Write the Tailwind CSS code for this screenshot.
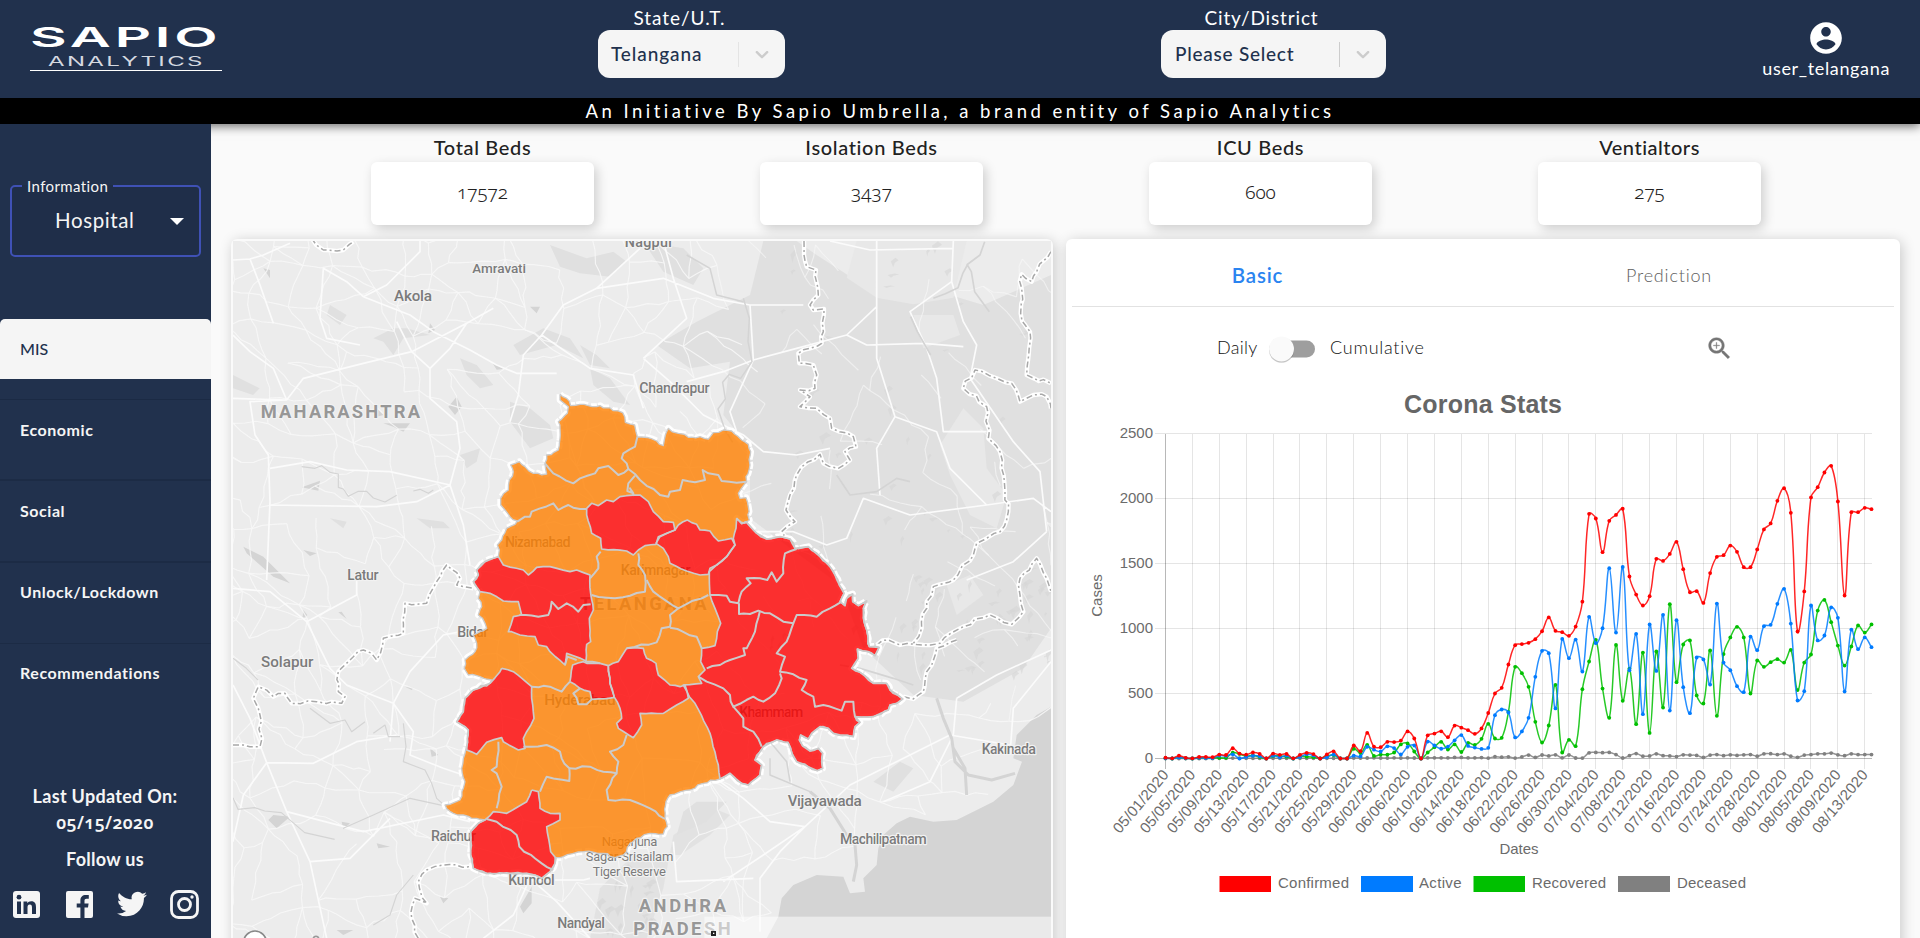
<!DOCTYPE html>
<html lang="en">
<head>
<meta charset="utf-8">
<title>Sapio Analytics</title>
<script src="https://cdn.jsdelivr.net/npm/@tailwindcss/browser@4"></script>
</head>
<body class="h-[938px] overflow-hidden bg-[#fafafa] font-['Lato',sans-serif] text-[#222]">

<header class="relative z-10 shadow-[0_2px_10px_rgba(0,0,0,0.6)]">
  <div class="flex h-[98px] bg-[#21314d] text-white">
    <div class="w-[480px] pt-4 pl-[30px]">
      <svg class="overflow-visible" width="192" height="56" viewBox="0 -8 192 56" font-family="Inter, sans-serif" fill="#fff">
        <text transform="translate(0 23) scale(2.05 1)" font-size="27.500" font-weight="600" textLength="91.500" lengthAdjust="spacing">SAPIO</text>
        <text transform="translate(18 42) scale(1.85 1)" font-size="13" textLength="83.500" lengthAdjust="spacing" fill="#d5d9e0">ANALYTICS</text>
        <rect y="46" width="192" height="1"/>
      </svg>
    </div>
    <div class="ml-[118px] w-[187px] pt-[6px]">
      <div class="h-6 pr-6 text-center text-[19px] leading-6 tracking-[0.95px]">State/U.T.</div>
      <div class="flex h-12 items-center rounded-xl bg-[#f5f5f5] pl-[13px] text-[19px] font-medium text-[#21314d]">
        <span class="w-[127px] tracking-[0.9px]">Telangana</span>
        <span class="h-[25px] w-px bg-[#e4e4e4]"></span>
        <svg class="ml-3" width="22" height="22" viewBox="0 0 20 20" fill="#ccc"><path d="M4.516 7.548c.436-.446 1.043-.481 1.576 0L10 11.295l3.908-3.747c.533-.481 1.141-.446 1.574 0 .436.445.408 1.197 0 1.615-.406.418-4.695 4.502-4.695 4.502a1.095 1.095 0 0 1-1.576 0S4.924 9.581 4.516 9.163s-.436-1.170 0-1.615z"/></svg>
      </div>
    </div>
    <div class="ml-[376px] w-[225px] pt-[6px]">
      <div class="h-6 pr-6 text-center text-[19px] leading-6 tracking-[0.85px]">City/District</div>
      <div class="flex h-12 items-center rounded-xl bg-[#f5f5f5] pl-[14px] text-[19px] font-medium text-[#21314d]">
        <span class="w-[164px] tracking-[0.75px]">Please Select</span>
        <span class="h-[25px] w-px bg-[#ccc]"></span>
        <svg class="ml-3" width="22" height="22" viewBox="0 0 20 20" fill="#ccc"><path d="M4.516 7.548c.436-.446 1.043-.481 1.576 0L10 11.295l3.908-3.747c.533-.481 1.141-.446 1.574 0 .436.445.408 1.197 0 1.615-.406.418-4.695 4.502-4.695 4.502a1.095 1.095 0 0 1-1.576 0S4.924 9.581 4.516 9.163s-.436-1.170 0-1.615z"/></svg>
      </div>
    </div>
    <div class="mr-[30px] ml-auto flex flex-col items-center pt-[19px]">
      <svg width="38" height="38" viewBox="0 0 24 24" fill="#fff"><path d="M12 2C6.480 2 2 6.480 2 12s4.480 10 10 10 10-4.480 10-10S17.520 2 12 2zm0 3c1.660 0 3 1.340 3 3s-1.340 3-3 3-3-1.340-3-3 1.340-3 3-3zm0 14.200c-2.500 0-4.710-1.280-6-3.220.03-1.990 4-3.080 6-3.080 1.990 0 5.970 1.090 6 3.080-1.290 1.940-3.500 3.220-6 3.220z"/></svg>
      <div class="text-[18px] leading-[22px] tracking-[0.65px]">user_telangana</div>
    </div>
  </div>
  <div class="h-[26px] bg-black text-center text-[18.500px] leading-[26px] tracking-[3.480px] text-white">An Initiative By Sapio Umbrella, a brand entity of Sapio Analytics</div>
</header>

<div class="flex h-[814px]">
  <aside class="relative z-20 flex w-[211px] shrink-0 flex-col bg-[#21314d] text-[#f5f5f5]">
    <fieldset class="mt-[53px] ml-[10px] h-[80px] w-[191px] rounded-[5px] border-2 border-[#3f51b5] bg-[#1f2e49] pl-[10px]">
      <legend class="px-[5px] text-[15px] leading-[18px] tracking-[0.4px]">Information</legend>
      <div class="flex h-[50px] items-center pl-[33px] text-[20.500px] tracking-[0.6px]">
        <span class="w-[115px]">Hospital</span>
        <svg class="mt-[2px]" width="14" height="7" viewBox="0 0 14 7" fill="#fff"><path d="M0 0h14L7 7z"/></svg>
      </div>
    </fieldset>
    <nav class="mt-[62px] text-[16px] font-bold tracking-[0.55px]">
      <div class="h-[81px] border-b border-[#1b2a44]"><div class="h-[60px] rounded-t-[5px] bg-[#f5f5f5] pl-5 leading-[60px] font-medium tracking-normal text-[#21314d]">MIS</div></div>
      <div class="h-[81px] border-b-2 border-[#1c2b45] pl-5 leading-[60px]">Economic</div>
      <div class="h-[82px] border-b-2 border-[#1c2b45] pl-5 leading-[60px]">Social</div>
      <div class="h-[81px] border-b border-[#1c2b45] pl-5 leading-[58px]">Unlock/Lockdown</div>
      <div class="pl-5 leading-[58px]">Recommendations</div>
    </nav>
    <div class="mt-[81px] pr-px text-center text-[18px] leading-[26px] font-bold tracking-[0.3px]">
      <div>Last Updated On:</div>
      <div class="font-['Noto_Sans','Lato',sans-serif] text-[17.500px] font-semibold tracking-[0.4px] [font-feature-settings:'onum']">05/15/2020</div>
      <div class="mt-[11px]">Follow us</div>
    </div>
    <div class="mt-[17px] flex items-center pl-[13px]">
      <svg width="27" height="27" viewBox="0 0 27 27"><rect width="27" height="27" rx="3" fill="#f5f5f5"/><g fill="#21314d"><circle cx="6" cy="6.200" r="2.400"/><path d="M4 10.500h4V23H4zM10.500 10.500h3.800v1.700c.7-1.200 2-2 3.900-2 3.800 0 4.800 2.400 4.800 6V23h-4v-6c0-1.700-.2-3.400-2.200-3.400s-2.300 1.600-2.300 3.300V23h-4z"/></g></svg>
      <svg class="ml-[26px]" width="27" height="27" viewBox="0 0 27 27"><path fill="#f5f5f5" d="M2 0h23a2 2 0 0 1 2 2v23a2 2 0 0 1-2 2h-6.500V16.600h3.500l.6-4.200h-4.100V9.800c0-1.200.5-2 2.100-2h2.200V4.100c-.5-.1-1.600-.2-3-.2-3.300 0-5.400 1.900-5.400 5.400v3.100h-3.700v4.200h3.700V27H2a2 2 0 0 1-2-2V2a2 2 0 0 1 2-2z"/></svg>
      <svg class="ml-[24px]" width="30" height="30" viewBox="0 0 24 24" fill="#f5f5f5"><path d="M23.950 4.570a10 10 0 0 1-2.820.77 4.960 4.960 0 0 0 2.160-2.720c-.95.550-2 .950-3.130 1.180a4.920 4.920 0 0 0-8.380 4.480C7.690 8.090 4.070 6.130 1.640 3.160a4.820 4.820 0 0 0-.67 2.480c0 1.710.87 3.210 2.190 4.100a4.900 4.900 0 0 1-2.230-.62v.06a4.920 4.920 0 0 0 3.950 4.830 5 5 0 0 1-2.210.08 4.940 4.940 0 0 0 4.600 3.420A9.870 9.870 0 0 1 0 19.540a13.990 13.990 0 0 0 7.550 2.210c9.050 0 14-7.500 14-13.980 0-.21 0-.420-.02-.63a9.940 9.940 0 0 0 2.460-2.550z"/></svg>
      <svg class="ml-[23px]" width="29" height="29" viewBox="0 0 29 29" fill="none" stroke="#f5f5f5" stroke-width="2.800"><rect x="1.500" y="1.500" width="26" height="26" rx="7"/><circle cx="14.500" cy="14.500" r="6"/><circle cx="22" cy="7" r="1.700" fill="#f5f5f5" stroke="none"/></svg>
    </div>
  </aside>

  <main class="flex min-w-0 grow flex-col">
    <section class="grid h-[101px] w-[1633px] shrink-0 grid-cols-4 pt-[10px] pl-[77px] text-center">
      <div class="flex flex-col items-center"><div class="mb-[2px] text-[20px] leading-[26px] font-medium tracking-[0.65px]">Total Beds</div><div class="h-[63px] w-[223px] rounded-[6px] bg-white font-['Noto_Sans','Lato',sans-serif] text-[19px] leading-[61px] font-light [font-feature-settings:'onum'] shadow-[3px_4px_12px_rgba(0,0,0,0.18)]">17572</div></div>
      <div class="flex flex-col items-center"><div class="mb-[2px] text-[20px] leading-[26px] font-medium tracking-[0.65px]">Isolation Beds</div><div class="h-[63px] w-[223px] rounded-[6px] bg-white font-['Noto_Sans','Lato',sans-serif] text-[19px] leading-[61px] font-light [font-feature-settings:'onum'] shadow-[3px_4px_12px_rgba(0,0,0,0.18)]">3437</div></div>
      <div class="flex flex-col items-center"><div class="mb-[2px] text-[20px] leading-[26px] font-medium tracking-[0.65px]">ICU Beds</div><div class="h-[63px] w-[223px] rounded-[6px] bg-white font-['Noto_Sans','Lato',sans-serif] text-[19px] leading-[61px] font-light [font-feature-settings:'onum'] shadow-[3px_4px_12px_rgba(0,0,0,0.18)]">600</div></div>
      <div class="flex flex-col items-center"><div class="mb-[2px] text-[20px] leading-[26px] font-medium tracking-[0.5px]">Ventialtors</div><div class="h-[63px] w-[223px] rounded-[6px] bg-white font-['Noto_Sans','Lato',sans-serif] text-[19px] leading-[61px] font-light [font-feature-settings:'onum'] shadow-[3px_4px_12px_rgba(0,0,0,0.18)]">275</div></div>
    </section>

    <div class="mt-[14px] flex pl-[20px]">
      <section class="h-[760px] w-[822px] shrink-0 rounded-[6px] bg-[#fafafa] pt-[2px] pl-[2px] shadow-[2px_2px_14px_rgba(0,0,0,0.2)]">
        <svg class="block" width="818" height="697" viewBox="9 18 2454 2091" font-family="Roboto, sans-serif">
          <rect x="9" y="18" width="2454" height="2091" fill="#ececec"/>
          <g fill="#e0e0e0">
            <path d="M1600 18L1700 18 1760 60 1900 150 2040 200 2160 180 2260 210 2463 120V1180L2380 1300 2200 1400 2050 1380 1900 1240 1830 1050 1560 850 1560 640 1480 540 1500 380 1380 400 1280 330 1400 260 1560 180z"/>
            <path d="M1210 1860L1110 1960 1080 2110H1250L1300 1960 1330 1800 1450 1720 1500 1740 1440 1800 1350 1860z" opacity=".8"/>
            <path d="M960 30l110 40 80-20 40 30-50 45-90-10-60-20zM1240 20l120 20 60 60-30 50-90-40zM840 500l60 20 60 50 10 40-70 30-60-80zM1050 330l50 30 40 40-60-10zM1080 400l60 30 60 80-50-10-60-50zM850 330l90-50 80 30 40 60-80-40-110 30zM300 210l50 30-20 30-40-30zM430 310l60-30 40 0 70 20-80 10-30 50-30-40zM690 370l50 20 50 60-40 10-40-40zM9 420l80 40-20 20-60-20zM690 660l60-20-10 40-30 20zM300 850l50 10-10 20zM560 850l80 10 20 20-60 0z"/>
            <path d="M1930 1640l80-60 40 20-60 70zM1400 1700l90 0-60 60-90 40 20-70z"/>
          </g>
          <g fill="#e8e8e8"><path d="M1880 18h330l-40 170-120 20-110-20-90-60zM2050 240l120 0 20 60-110 40zM2200 520l60 60 10 120 60 80-30 100-80-40-60-120-30-90zM2150 1050l70-30 40 60-80 60z"/></g>
          <g fill="#d6d6d6" id="terrain"></g>
          <g fill="#d4d4d4">
            <path d="M2463 1415L2420 1440 2360 1500 2350 1570 2376 1580 2350 1650 2290 1700 2180 1755 2110 1760 2040 1745 2000 1765 1960 1800 1945 1840 1940 1890 1900 1930 1905 1970 1860 1975 1840 1925 1760 1920 1690 1950 1655 1990 1645 2045 1610 2110H2463z"/>
            <path d="M655 515l25-30 15 30-20 25zM100 100l20 5 0 25zM215 757l55-20-5 30zM600 265l15 20-20 10zM900 215l30 0-10 20zM785 380l35 22-20 2zM220 945l40 10-20 8zM40 935l60 30 80 80-50-20-80-70zM130 1740l50 5-40 35-25-25zM335 1760l25 5-20 18zM525 1355l25 5-5 5zM335 1130l15 22-25-20zM220 1125l12 15-15 15zM600 1540l25 20-20 5zM630 1985l25 5-15 15zM870 2015l35-60 0 50-25 30zM440 1825l40 10-35 5zM320 2085l50 0-30 15zM460 565l80 0-20 25-30-15zM440 520l20 20-20 5z"/>
          </g>
          <g fill="none" stroke="#f8f8f8" stroke-width="3.500" id="roads"></g>
          <g fill="none" stroke="#fbfbfb" stroke-width="5" stroke-linejoin="round">
            <path d="M9 75L60 72 100 60 180 25M60 72L90 150 130 265M9 490L170 495 130 400 60 350 9 300M170 495L220 430 400 385 545 350 710 265 790 220M170 495L60 500 75 600 115 660 120 800 110 1035M400 185L350 140 280 100 270 250 290 310 390 330M400 185L470 150 570 50 570 18M400 185L540 240 610 290 720 345 800 390 860 415 980 415M600 400L545 350 500 260M600 400L600 490 680 560 690 640 660 750 480 710 350 705 240 680 120 700M660 750L700 870 720 990M660 750L560 800 440 815 120 810M790 220L710 265 660 340 600 400M935 300L1000 210 1100 160 1230 40M935 300L880 360 865 480 840 560M935 300L1080 400 1210 420 1240 520M1100 160L1300 130 1450 190 1560 210 1720 210M1300 18L1330 130 1370 250 1240 370M1240 370L1320 440 1420 540 1540 600 1600 650 1700 660 1800 640M1370 440L1480 410 1570 375 1700 340 1850 300 1940 215M1560 210L1570 375 1500 530 1520 590M1800 18L1920 45 2170 40M2170 18L2165 140 2040 230 2090 340 2120 430 2140 590 2270 590M2165 140L2200 260 2240 330 2220 430 2350 620 2430 710 2450 890M1940 18L1940 370 1995 545 2120 590 2160 700 2270 810 2040 840 1900 790 1850 910 1790 930 1690 890 1560 890M1995 545L1940 640 1950 780M1850 300L1910 330 2080 325 2200 335M2270 810L2410 790 2463 830M2450 890L2350 980 2210 1035M110 1583L250 1585 380 1520 500 1500M110 1583L60 1450 9 1350M110 1583L170 1730 240 1880 290 2110M110 1583L40 1680 9 1820M230 1160L120 1070 9 1060M230 1160L300 1300 350 1350 490 1405 540 1310 640 1200 740 1180M230 1160L380 1080 380 1035M490 1405L550 1490 540 1560 640 1600 700 1620M490 1405L480 1520M170 1730L400 1790 640 1740 720 1760M240 1880L360 1870 480 1750M900 1930L850 2040 760 2110M900 1930L980 2000 1080 2110M1725 1775L1620 1760 1540 1690 1470 1640M1725 1775L1860 1650 1960 1600 2160 1500 2340 1530M1725 1775L1600 1860 1480 1940M1725 1775L1650 1850 1590 1930 1590 2090M2180 1390L2170 1500 2100 1640 1960 1700M2340 1560L2350 1420 2463 1280M2180 1390L2300 1320 2463 1245M1570 1930L1340 1940 1330 1820M930 1935L1060 1935 1080 1930"/>
          </g>
          <g fill="none" stroke="#d4d4d4" stroke-width="4" stroke-linejoin="round">
            <path d="M215 695l40 5 20-8 25 20 25 5 0 40 15 5 15 22 30-15 25 0 20 20 35 12 35-20M550 768l20-5 25 12 15-10M9 1688l15 35 50-5 30 10 50 5 70 60 90 20M340 1780l90-40 110-50 100 22M520 1465l8 70-8 45 65 25 20 40 15 45 20 18M9 1270l40 30 35 35M240 1420l60 45 45-10 20 35 40-30M430 1495l35-25 10 35 35 0M430 2070l50-30 20-60 50-60" stroke-width="3.500"/>
            <path d="M1620 1520l50 60 10 60M1620 1570l0 50 120 50M1540 190l18 60-4 70 12 60-34 50-34-12-20 24 8 50-22 30 20 60 24 40M1370 60l70 40 20 80 80 20" stroke-width="4.500"/>
            <path d="M1740 1670l60 50 50 80 25 30 5 60-10 50M2120 1390l20 60 25 60 10 70 40 40 70 15 70-20M2170 1540l35 60 5 80" stroke-width="9"/>
            <path d="M2042 245l20 45 40 70M2110 190l36-14 38-18 14-42 14-26 12 20 10 60 44 60M2210 90l40-30 14-40M1830 1290l60 10 100 30 60 20M1820 720l40 60 80-10 60-40 40 10" stroke-width="5"/>
          </g>
          <g id="stateLines" fill="none" stroke-linejoin="round">
            <g stroke="#fff" stroke-width="13" id="stateHalo"></g>
            <g stroke="#a8a8a8" stroke-width="4.500" stroke-dasharray="18 9 6 9" id="stateDash"></g>
          </g>
          <path id="stateEdge" fill="none" stroke="#fff" stroke-width="20" stroke-linejoin="round" stroke-dasharray="34 9 20 4"/>
          <g fill="#7b7b7b" font-weight="500" font-size="43" stroke="#f2f2f2" stroke-width="7" stroke-linejoin="round" paint-order="stroke">
            <text x="1184" y="35" textLength="146">Nagpur</text>
            <text x="727" y="115" font-size="41" textLength="161">Amravati</text>
            <text x="492" y="198" font-size="46" textLength="114">Akola</text>
            <text x="1228" y="473" textLength="211">Chandrapur</text>
            <text x="825" y="935" textLength="197">Nizamabad</text>
            <text x="352" y="1034" textLength="94">Latur</text>
            <text x="1172" y="1020" textLength="210">Karimnagar</text>
            <text x="682" y="1206" textLength="93">Bidar</text>
            <text x="93" y="1297" font-size="46" textLength="157">Solapur</text>
            <text x="943" y="1409" font-size="46" textLength="214">Hyderabad</text>
            <text x="1528" y="1447" textLength="192">Khammam</text>
            <text x="2255" y="1556" textLength="163">Kakinada</text>
            <text x="1673" y="1712" font-size="46" textLength="222">Vijayawada</text>
            <text x="1830" y="1828" textLength="260">Machilipatnam</text>
            <text x="603" y="1819" textLength="135">Raichur</text>
            <text x="835" y="1951" textLength="139">Kurnool</text>
            <text x="982" y="2078" textLength="143">Nandyal</text>
            <g font-size="39" font-weight="400">
              <text x="1115" y="1833" textLength="167">Nagarjuna</text>
              <text x="1067" y="1878" textLength="263">Sagar-Srisailam</text>
              <text x="1088" y="1923" textLength="220">Tiger Reserve</text>
            </g>
            <g fill="#979797" font-size="55" font-weight="700">
              <text x="92" y="549" textLength="478">MAHARASHTRA</text>
              <text x="1050" y="1124" textLength="380">TELANGANA</text>
              <text x="1226" y="2032" textLength="262">ANDHRA</text>
              <text x="1210" y="2100" textLength="292">PRADESH</text>
            </g>
          </g>
          <g opacity=".8">
            <path id="stateFill" fill="#ff8000"/>
            <g id="redFill" fill="#f00"></g>
          </g>
          <g id="districtLines" fill="none" stroke="#cbcbcb" stroke-width="6" stroke-linejoin="round"></g>
          <rect x="1423" y="2045" width="1040" height="64" fill="#fff" opacity=".5"/>
          <rect x="1443" y="2088" width="15" height="15" fill="#222"/><rect x="1449" y="2093" width="4" height="4" fill="#fff"/>
          <circle cx="75" cy="2122" r="34" fill="#fff" stroke="#888" stroke-width="5"/>
          <circle cx="258" cy="2112" r="8" fill="#fff" stroke="#999" stroke-width="5"/>
        </svg>
      </section>

      <section class="ml-[13px] h-[760px] w-[834px] shrink-0 rounded-[6px] bg-white px-[6px] shadow-[2px_2px_14px_rgba(0,0,0,0.2)]">
        <div class="grid h-[68px] grid-cols-2 border-b border-[#e2e2e2] text-center leading-[72px]">
          <div class="pr-[40px] text-[20.500px] font-semibold tracking-[0.8px] text-[#2a84f0]">Basic</div>
          <div class="pl-[143px] text-left text-[18px] font-light tracking-[0.8px] text-[#606060]">Prediction</div>
        </div>
        <div class="flex h-[84px] items-center pl-[145px] text-[18px] font-light text-[#111]">
          <span class="-mt-[3px] w-[52px] tracking-[0.3px]">Daily</span>
          <svg width="48" height="36" viewBox="0 0 48 36"><rect x="6" y="9.500" width="40" height="17" rx="8.500" fill="#9e9e9e"/><circle cx="12.500" cy="19.500" r="12.500" fill="#000" opacity=".12"/><circle cx="12.500" cy="18.800" r="12.500" fill="#000" opacity=".15"/><circle cx="12.500" cy="18" r="12.500" fill="#fafafa"/></svg>
          <span class="-mt-[3px] ml-[13px] w-[375px] tracking-[0.75px]">Cumulative</span>
          <svg class="-mt-[2px]" width="29" height="29" viewBox="0 0 24 24" fill="#757575"><path d="M15.500 14h-.79l-.28-.27C15.410 12.590 16 11.110 16 9.500 16 5.910 13.090 3 9.500 3S3 5.910 3 9.500 5.910 16 9.500 16c1.610 0 3.090-.59 4.230-1.570l.27.28v.79l5 4.990L20.490 19l-4.990-5zm-6 0C7.010 14 5 11.990 5 9.500S7.010 5 9.500 5 14 7.010 14 9.500 11.990 14 9.500 14zM12 9.250h-2.250V7h-.5v2.250H7v.5h2.250V12h.5V9.750H12z" stroke="#757575" stroke-width=".3"/></svg>
        </div>
        <svg class="-ml-[6px] block" width="834" height="520" viewBox="1066 391 834 520" font-family="'Liberation Sans', Arial, sans-serif" font-size="15" fill="#6b6b6b">
          <text x="1404" y="413" font-size="25" font-weight="700" fill="#666" textLength="158">Corona Stats</text>
          <g id="grid" stroke="#000" stroke-opacity=".1" shape-rendering="crispEdges"></g>
          <g id="ticks"></g>
          <text transform="translate(1102 595.500) rotate(-90)" text-anchor="middle">Cases</text>
          <text x="1519" y="854" text-anchor="middle">Dates</text>
          <g id="series" stroke-width="1.500"></g>
          <rect x="1219.500" y="876" width="51.500" height="16" fill="#f00"/><text x="1278" y="888" textLength="71">Confirmed</text>
          <rect x="1361" y="876" width="52" height="16" fill="#007bff"/><text x="1419" y="888" textLength="42.500">Active</text>
          <rect x="1473.500" y="876" width="51.500" height="16" fill="#00c000"/><text x="1532" y="888" textLength="74">Recovered</text>
          <rect x="1618" y="876" width="52" height="16" fill="#808080"/><text x="1677" y="888" textLength="69">Deceased</text>
        </svg>
      </section>
    </div>
  </main>
</div>

<script>
const NS = 'http://www.w3.org/2000/svg';
function add(parent, tag, attrs, text) {
  const e = document.createElementNS(NS, tag);
  for (const k in attrs) e.setAttribute(k, attrs[k]);
  if (text) e.textContent = text;
  document.getElementById(parent).appendChild(e);
  return e;
}
let seed = 7;
const rnd = () => (seed = (seed * 16807) % 2147483647) / 2147483647;

// Adds small irregular bends between the vertices of a polyline.
function rough(str, amp, step) {
  const p = str.trim().split(/\s+/).map(s => s.split(',').map(Number));
  const out = [p[0]];
  for (let i = 1; i < p.length; i++) {
    const [x0, y0] = p[i - 1], [x1, y1] = p[i];
    const n = Math.max(1, Math.round(Math.hypot(x1 - x0, y1 - y0) / step));
    for (let k = 1; k < n; k++) out.push([x0 + (x1 - x0) * k / n + (rnd() - .5) * amp, y0 + (y1 - y0) * k / n + (rnd() - .5) * amp]);
    out.push(p[i]);
  }
  return 'M' + out.map(q => q[0].toFixed(1) + ' ' + q[1].toFixed(1)).join('L');
}

// Minor roads: jittered lattice on land
const nodes = {};
for (let i = -1; i < 27; i++) for (let j = -1; j < 23; j++) nodes[i + ',' + j] = [i * 98 + (rnd() - .5) * 85, j * 98 + (rnd() - .5) * 85];
const onLand = (x, y) => !(x > 1650 && y > 1900) && !(x > 1900 && y > 1750) && !(x > 2300 && y > 1480);
for (let i = -1; i < 26; i++) for (let j = -1; j < 22; j++) {
  const a = nodes[i + ',' + j];
  for (const [di, dj] of [[1, 0], [0, 1], [1, 1]]) {
    const b = nodes[(i + di) + ',' + (j + dj)];
    if (!b || !onLand(a[0], a[1]) || !onLand(b[0], b[1])) continue;
    const east = a[0] > 1450 && a[1] < 1400;
    if (rnd() < (east ? .14 : dj && di ? .3 : .72)) add('roads', 'path', { d: rough(a[0] + ',' + a[1] + ' ' + b[0] + ',' + b[1], 14, 32), opacity: east ? .6 : .85 });
  }
}
// Relief flecks in the eastern hills
for (let k = 0; k < 110; k++) {
  let x = 1600 + rnd() * 850, y = 30 + rnd() * 1250;
  if (k > 50) { x = 2000 + rnd() * 460; y = 1000 + rnd() * 330; }
  if (k > 85) { x = 1100 + rnd() * 180; y = 1900 + rnd() * 200; }
  const w = 8 + rnd() * 28, h = 6 + rnd() * 30;
  add('terrain', 'path', { d: `M${x} ${y}l${w * .6} ${-h * .4} ${w * .4} ${h * .3} ${-w * .5} ${h * .3} ${-w * .2} ${h * .5}z`, opacity: .6 });
}

const stateBorders = [
  '1722,18 1722,60 1730,95 1758,105 1765,180 1740,210 1750,225 1782,222 1780,290 1775,325 1740,340 1705,355 1708,385 1750,390 1760,420 1755,460 1710,465 1740,485 1710,515 1760,520 1800,550 1805,580 1870,605 1878,635 1845,650 1860,675 1825,700 1780,685 1770,658 1735,680 1700,720 1680,780 1668,825 1695,860 1655,890 1670,912',
  '2463,50 2420,110 2405,140 2375,118 2372,235 2400,290 2390,420 2463,445',
  '2463,520 2450,485 2410,480 2370,500 2345,445 2300,430 2235,405 2200,460 2270,515 2275,610 2310,650 2325,770 2335,830 2310,890 2240,925 2230,960 2170,1035 2110,1055 2090,1100 2075,1180 2050,1225',
  '1940,1230 1975,1215 2010,1230 2080,1230 2130,1225 2200,1175 2280,1140 2345,1168 2380,1130 2370,1080 2370,1030 2420,970 2450,1030 2463,1070',
  '2180,1215 2120,1240 2090,1310 2080,1370 2050,1392 2020,1385',
  '9,1530 40,1530 90,1535 90,1440 70,1390 85,1355 130,1385 165,1375 185,1405 260,1400 335,1405 345,1385 325,1370 325,1310 370,1265 400,1245 440,1275 460,1210 520,1195 525,1105 590,1105 620,1040 650,990 690,1030 680,1050 730,1060',
  '565,2110 545,2050 555,1990 590,2005 565,1940 590,1905 640,1890 740,1900',
  '245,10 280,45 340,45 370,20'
];
for (const b of stateBorders) {
  const d = rough(b, 12, 22);
  add('stateHalo', 'path', { d });
  add('stateDash', 'path', { d });
}

const east = '1520,850 1535,866 1548,860 1580,895 1610,912 1650,905 1680,912 1695,940 1735,935 1770,965 1800,995 1815,1020 1828,1050 1842,1075 1830,1100 1845,1112 1850,1090 1868,1077 1868,1100 1885,1112 1910,1098 1900,1120 1902,1160 1910,1185 1918,1235 1947,1237 1935,1262 1915,1250 1882,1242 1885,1270 1865,1300 1890,1312 1930,1345 1970,1345 1980,1365 2018,1392 2000,1405 1980,1410 1975,1425 1930,1445 1875,1445 1890,1462 1875,1475 1870,1505 1810,1495 1795,1480 1770,1475 1745,1495 1735,1512 1712,1500 1708,1515 1718,1533 1740,1548 1765,1540 1778,1555 1775,1580 1778,1600 1762,1607 1735,1595 1700,1580 1686,1555 1674,1522 1665,1522 1640,1515 1600,1535 1590,1550 1575,1575 1595,1590 1590,1620 1565,1640 1555,1650 1535,1645 1500,1615 1470,1632';
const outline = '990,478 1010,490 1022,512 1050,508 1075,512 1110,512 1150,527 1178,533 1186,562 1214,570 1218,590 1222,606 1235,606 1280,618 1300,632 1306,600 1315,580 1345,595 1375,607 1410,605 1435,612 1450,593 1480,585 1505,588 1535,615 1555,628 1562,650 1560,690 1548,725 1550,740 1525,775 1530,790 1548,788 1555,815 1558,855 1545,865 ' + east +
  ' 1420,1645 1380,1665 1320,1680 1308,1700 1305,1750 1312,1775 1300,1797 1260,1795 1220,1810 1200,1825 1180,1860 1155,1868 1120,1855 1060,1850 1000,1865 975,1868 975,1885 960,1910 935,1930 915,1920 890,1915 820,1915 770,1915 730,1900 722,1860 722,1790 745,1765 765,1755 740,1750 700,1740 670,1735 645,1710 690,1695 700,1660 705,1640 695,1600 700,1570 707,1545 712,1510 715,1485 705,1475 680,1460 700,1430 705,1390 730,1365 780,1345 785,1335 750,1325 715,1320 703,1300 705,1275 735,1250 740,1225 730,1200 750,1190 770,1180 765,1165 745,1140 755,1115 745,1090 750,1070 730,1040 745,1020 740,1005 765,980 790,970 805,965 808,945 802,930 815,915 830,880 855,868 862,858 840,845 825,825 812,810 812,790 835,765 838,735 850,710 842,690 868,680 885,695 910,715 950,717 945,685 950,660 985,645 990,610 985,560 1012,535 1015,515 990,495 990,478';
const reds = [
  '1070,820 1085,805 1105,812 1130,795 1150,800 1170,785 1230,780 1255,800 1270,830 1300,860 1330,862 1335,885 1310,895 1285,905 1278,928 1245,932 1225,945 1210,960 1190,948 1115,942 1112,910 1085,895 1070,840 1070,820',
  '1278,925 1290,905 1335,885 1345,870 1372,855 1400,868 1410,885 1440,888 1465,918 1505,910 1515,930 1490,965 1460,990 1440,1000 1435,1018 1410,1020 1370,1008 1320,985 1315,965 1300,940 1278,925',
  east + ' 1465,1590 1440,1495 1395,1405 1378,1385 1360,1350 1415,1345 1405,1325 1425,1305 1412,1280 1415,1240 1455,1232 1462,1190 1472,1165 1455,1120 1440,1080 1438,1010 1460,990 1490,965 1515,930 1510,910 1518,880 1520,850',
  '805,965 820,990 880,1005 895,1020 920,997 960,995 1020,1010 1040,1005 1080,1020 1082,1075 1090,1125 1078,1150 1082,1220 1070,1228 1068,1278 1010,1255 1005,1290 960,1250 950,1235 925,1230 915,1205 870,1200 845,1190 835,1190 850,1145 875,1140 865,1100 820,1098 780,1075 750,1070 730,1040 745,1020 740,1005 765,980 790,970 805,965',
  '1020,1340 1028,1290 1060,1280 1070,1285 1110,1285 1135,1292 1140,1345 1152,1382 1150,1388 1085,1393 1080,1370 1050,1360 1020,1340',
  '1135,1292 1165,1280 1190,1240 1240,1240 1250,1270 1278,1285 1285,1320 1320,1350 1350,1355 1365,1350 1375,1390 1340,1410 1300,1435 1230,1435 1235,1470 1210,1508 1165,1480 1160,1465 1175,1450 1170,1420 1152,1385 1140,1345 1135,1292',
  '815,1300 850,1310 905,1355 905,1390 912,1450 880,1510 885,1540 865,1545 820,1520 815,1508 770,1522 740,1558 710,1545 715,1485 705,1475 680,1460 700,1430 705,1390 730,1365 780,1345 810,1310 815,1300',
  '905,1665 925,1670 930,1720 960,1735 990,1735 990,1755 950,1775 962,1850 978,1870 975,1885 960,1910 935,1930 915,1920 890,1915 770,1915 730,1900 722,1860 722,1790 745,1765 765,1755 790,1730 830,1735 890,1700 905,1665'
];
const inner = [
  '945,685 970,715 1030,745 1050,730 1095,715 1105,700 1135,693 1165,720 1195,702 1190,685 1175,670 1180,655 1215,635 1222,606',
  '1195,702 1230,735 1290,780 1315,785 1320,770 1350,765 1358,735 1395,742 1425,735 1418,705 1435,715 1465,720 1475,738 1520,743 1550,740',
  '1215,722 1195,745 1192,768 1210,775 1200,760 1212,782',
  '862,860 885,845 900,845 905,830 970,805 985,825 1015,810 1050,822 1070,822',
  '1440,1080 1490,1082 1500,1100 1525,1105 1535,1070 1550,1055 1562,1045 1550,1030 1590,1030 1612,1035 1625,1012 1640,1040 1660,1015 1665,955 1700,942',
  '1527,1105 1527,1137 1560,1137 1585,1127 1620,1135 1660,1160 1690,1165 1700,1140 1760,1145 1800,1120 1835,1100',
  '1590,1127 1575,1190 1550,1240 1540,1240 1545,1260 1500,1275 1470,1290 1430,1300',
  '1690,1165 1670,1220 1640,1255 1665,1265 1650,1310 1690,1318 1730,1335 1715,1365 1750,1385 1755,1415 1780,1410 1835,1427 1845,1400 1870,1400 1875,1445',
  '1650,1315 1655,1330 1635,1375 1600,1400 1570,1385 1510,1415 1500,1380 1480,1360 1430,1340 1405,1325',
  '1510,1415 1540,1450 1540,1475 1570,1490 1595,1535',
  '868,1140 925,1145 955,1140 965,1100 985,1122 1010,1105 1045,1130 1060,1110 1082,1108',
  '770,1752 800,1760 860,1800 868,1835 935,1885 970,1905',
  '1112,950 1100,965 1105,1000 1080,1030',
  '1225,955 1225,990 1245,1020 1245,1070 1155,1090 1085,1080',
  '1250,1035 1270,1070 1345,1120 1435,1080',
  '1345,1120 1320,1140 1320,1175 1295,1180 1280,1222 1190,1240',
  '1320,1178 1400,1205 1415,1240',
  '1065,1280 1110,1285',
  '1005,1290 1012,1265 1040,1275',
  '905,1355 960,1355 995,1370 1020,1340',
  '1050,1360 1030,1375 1045,1408 1070,1408 1085,1393',
  '880,1535 950,1530 990,1550 995,1570 1018,1600 1018,1638 950,1625 930,1670',
  '1018,1600 1080,1595 1120,1610 1160,1615 1165,1580 1140,1550 1180,1530 1190,1500',
  '1160,1615 1130,1665 1135,1695 1200,1695 1260,1720 1305,1752',
  '805,1520 800,1595 785,1605 800,1615 815,1655 800,1720'
];
const od = rough(outline, 7, 14);
document.getElementById('stateFill').setAttribute('d', od);
document.getElementById('stateEdge').setAttribute('d', od);
add('districtLines', 'path', { d: od, 'stroke-width': 4 });
for (const r of reds) {
  const d = rough(r, 3, 20);
  add('redFill', 'path', { d });
  add('districtLines', 'path', { d, 'stroke-width': 5 });
}
for (const l of inner) add('districtLines', 'path', { d: rough(l, 6, 22) });

// Line chart
const X = i => 1165.5 + i * 706 / 105, Y = v => 758.5 - v * 0.13;
for (let v = 0; v <= 2500; v += 500) {
  add('grid', 'line', { x1: 1155, x2: 1872, y1: Y(v), y2: Y(v), 'stroke-opacity': v ? .1 : .28 });
  add('ticks', 'text', { x: 1153, y: Y(v) + 4.5, 'text-anchor': 'end' }, String(v));
}
for (let i = 0; i < 105; i += 4) {
  add('grid', 'line', { x1: Math.round(X(i) - .5) + .5, x2: Math.round(X(i) - .5) + .5, y1: 434, y2: 769, 'stroke-opacity': i ? .1 : .28 });
  const d = new Date(Date.UTC(2020, 4, 1 + i));
  const label = String(d.getUTCMonth() + 1).padStart(2, '0') + '/' + String(d.getUTCDate()).padStart(2, '0') + '/2020';
  add('ticks', 'text', { transform: `translate(${X(i)} 772) rotate(-50)`, 'text-anchor': 'end', y: 5, textLength: 77 }, label);
}
const data = {
  '#808080': [0,0,0,0,0,0,0,0,2,2,3,2,2,1,1,0,2,1,1,0,2,2,2,0,2,2,0,0,4,3,4,5,4,4,5,4,5,4,0,5,5,5,5,8,8,5,5,7,3,14,10,13,3,12,26,8,27,20,28,5,27,4,3,44,47,45,47,30,4,22,38,18,20,36,22,20,15,28,26,24,8,26,30,22,28,24,28,30,18,36,37,30,36,18,9,26,30,36,36,42,28,22,36,30,30,30],
  '#00c000': [2,0,10,2,0,5,5,5,5,5,45,35,18,24,12,0,20,20,14,0,16,14,10,0,20,26,0,0,75,42,105,20,30,30,46,108,116,54,0,46,87,128,69,108,50,120,105,151,267,154,159,359,705,656,551,282,123,254,567,46,144,95,533,746,913,538,313,874,444,692,264,815,197,823,392,1187,587,877,908,485,423,831,328,803,931,1013,931,500,754,705,741,764,738,836,526,738,800,1138,1220,1049,869,715,862,1023,969,1031],
  '#007bff': [2,0,8,2,0,5,4,4,22,20,32,0,12,22,18,0,22,10,22,0,12,33,24,0,10,30,0,0,22,16,90,68,54,94,80,31,90,100,0,130,100,75,92,140,180,97,84,74,82,333,377,354,162,208,313,628,828,810,385,920,772,915,669,1090,887,1002,1464,969,1474,679,959,341,1031,674,1105,369,1064,549,349,777,762,569,1192,738,679,556,510,938,833,1018,1028,1190,1305,1038,446,518,1177,908,946,1162,1082,515,992,841,931,856],
  '#ff0000': [6,1,22,5,1,12,12,10,30,27,79,38,30,46,36,0,38,28,35,1,28,44,34,0,31,55,0,0,100,56,197,92,87,128,126,138,208,154,0,178,192,209,164,253,237,218,190,231,350,500,544,723,872,880,890,918,979,1085,982,972,944,1015,1206,1882,1846,1587,1828,1874,1921,1400,1261,1177,1249,1536,1520,1574,1667,1456,1279,1287,1197,1426,1551,1564,1638,1590,1472,1472,1608,1762,1808,1982,2079,1890,977,1285,2008,2087,2200,2251,1977,1254,1895,1895,1928,1918]
};
for (const color in data) {
  const p = data[color].map((v, i) => [X(i), Y(v)]), n = p.length;
  const ctl = p.map((c, i) => {
    const a = p[Math.max(0, i - 1)], b = p[Math.min(n - 1, i + 1)];
    const d1 = Math.hypot(c[0] - a[0], c[1] - a[1]), d2 = Math.hypot(b[0] - c[0], b[1] - c[1]);
    const s1 = .4 * d1 / (d1 + d2), s2 = .4 * d2 / (d1 + d2), cap = y => Math.min(y, 758.5);
    return [[c[0] - s1 * (b[0] - a[0]), cap(c[1] - s1 * (b[1] - a[1]))], [c[0] + s2 * (b[0] - a[0]), cap(c[1] + s2 * (b[1] - a[1]))]];
  });
  let d = 'M' + p[0];
  for (let i = 1; i < n; i++) d += 'C' + ctl[i - 1][1] + ' ' + ctl[i][0] + ' ' + p[i];
  add('series', 'path', { d, fill: 'none', stroke: color, 'stroke-opacity': .85 });
  for (const q of p) add('series', 'circle', { cx: q[0], cy: q[1], r: 1.9, fill: color });
}
</script>
</body>
</html>
